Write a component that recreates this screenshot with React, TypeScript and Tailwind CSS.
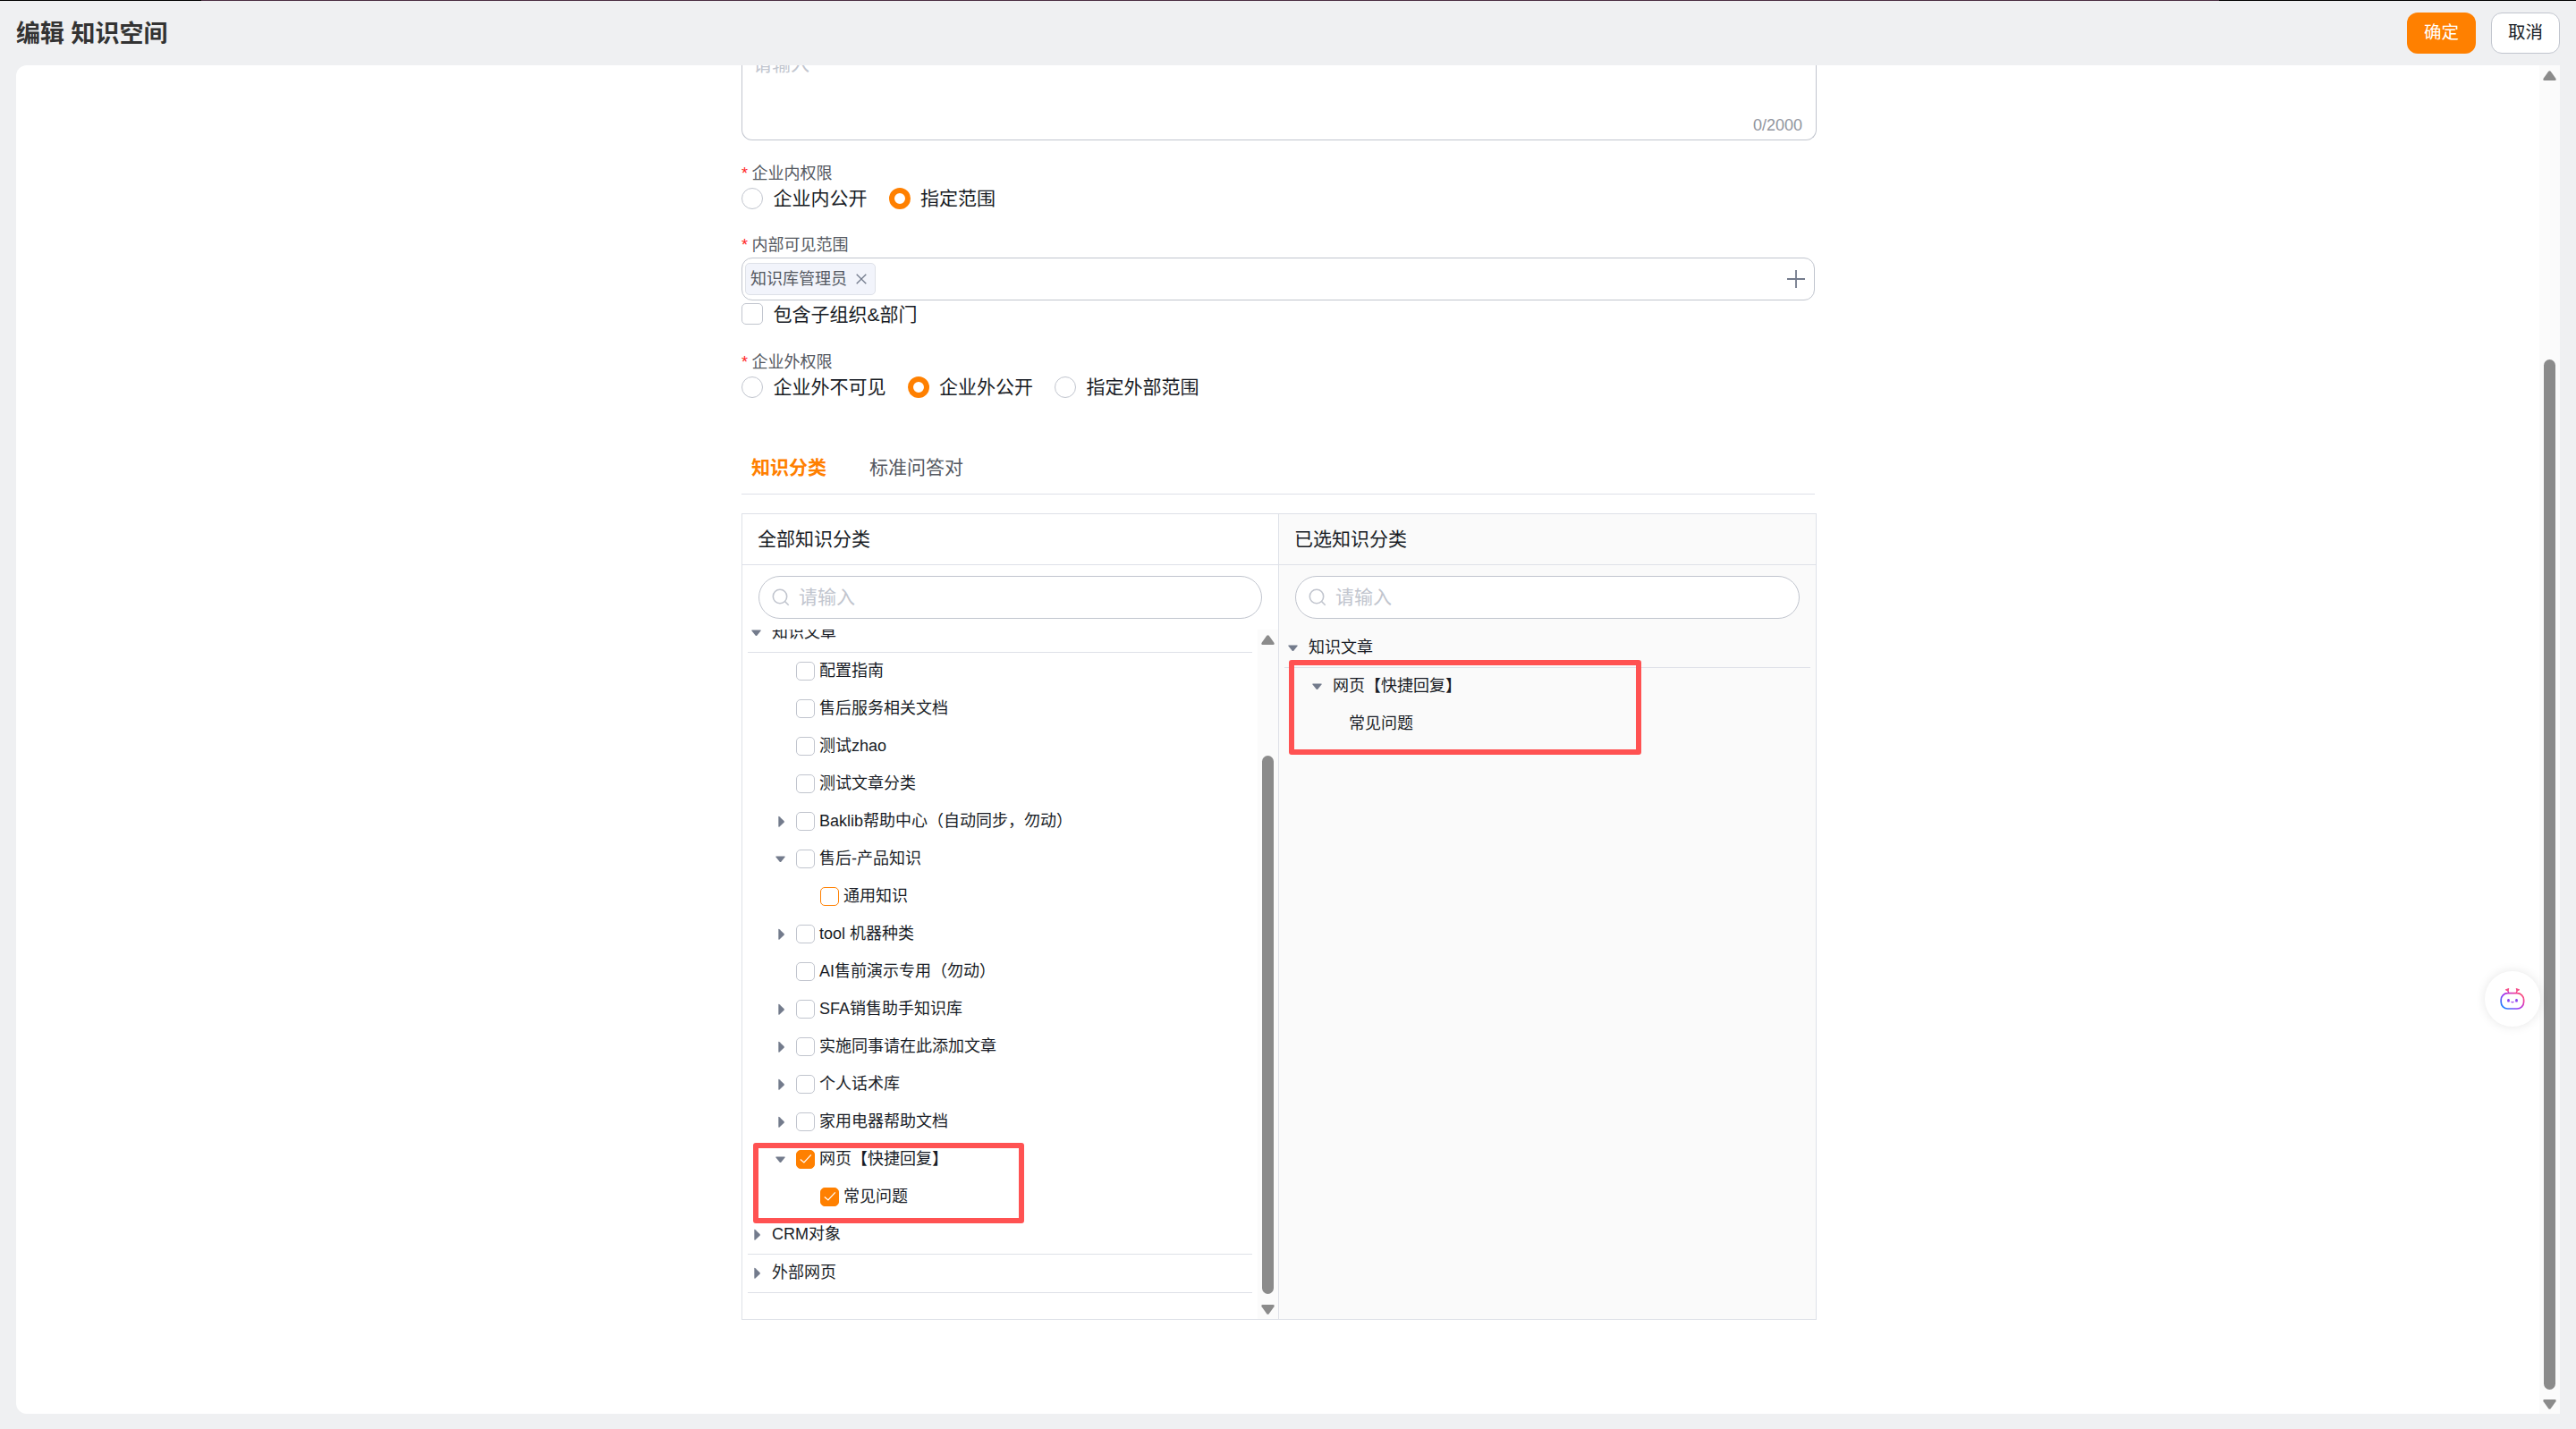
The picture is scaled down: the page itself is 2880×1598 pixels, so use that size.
import type { ReactNode } from 'react';
import clsx from 'clsx';

type TreeNode = {
  label: string;
  level: 0 | 1 | 2;
  arrow?: 'open' | 'closed';
  box?: 'off' | 'on' | 'hover';
};

const allNodes: TreeNode[] = [
  { label: '知识文章', level: 0, arrow: 'open' },
  { label: '配置指南', level: 1, box: 'off' },
  { label: '售后服务相关文档', level: 1, box: 'off' },
  { label: '测试zhao', level: 1, box: 'off' },
  { label: '测试文章分类', level: 1, box: 'off' },
  { label: 'Baklib帮助中心（自动同步，勿动）', level: 1, arrow: 'closed', box: 'off' },
  { label: '售后-产品知识', level: 1, arrow: 'open', box: 'off' },
  { label: '通用知识', level: 2, box: 'hover' },
  { label: 'tool 机器种类', level: 1, arrow: 'closed', box: 'off' },
  { label: 'AI售前演示专用（勿动）', level: 1, box: 'off' },
  { label: 'SFA销售助手知识库', level: 1, arrow: 'closed', box: 'off' },
  { label: '实施同事请在此添加文章', level: 1, arrow: 'closed', box: 'off' },
  { label: '个人话术库', level: 1, arrow: 'closed', box: 'off' },
  { label: '家用电器帮助文档', level: 1, arrow: 'closed', box: 'off' },
  { label: '网页【快捷回复】', level: 1, arrow: 'open', box: 'on' },
  { label: '常见问题', level: 2, box: 'on' },
  { label: 'CRM对象', level: 0, arrow: 'closed' },
  { label: '外部网页', level: 0, arrow: 'closed' },
];

const selectedNodes: TreeNode[] = [
  { label: '知识文章', level: 0, arrow: 'open' },
  { label: '网页【快捷回复】', level: 1, arrow: 'open' },
  { label: '常见问题', level: 2 },
];

function Caret({ state }: { state?: 'open' | 'closed' }) {
  return (
    <svg viewBox="0 0 18 18" className="h-[18px] w-[18px] shrink-0 fill-[#737b8c]">
      {state === 'open' && <path d="M5 5.500h9q1.300 0 .5 1.100L10.500 11.600q-1 1-2 0L4.500 6.600q-.8-1.100.5-1.100z" />}
      {state === 'closed' && <path d="M7.300 3.600q0-1.300 1.200-.4l5 4.700q.9.900 0 1.800l-5 4.700q-1.200.9-1.200-.4z" />}
    </svg>
  );
}

function TreeCheckbox({ state }: { state: 'off' | 'on' | 'hover' }) {
  return (
    <span
      className={clsx(
        'flex h-[21px] w-[21px] shrink-0 items-center justify-center rounded-[5px] border',
        state === 'off' && 'border-[#c1c5ce] bg-white',
        state === 'hover' && 'border-[#ff8000] bg-white',
        state === 'on' && 'border-[#ff8000] bg-[#ff8000]'
      )}
    >
      {state === 'on' && (
        <svg viewBox="0 0 14 14" className="h-[14px] w-[14px] fill-none stroke-white">
          <path d="M.8 7.500 4.900 11 12.800 2.400" strokeWidth="1.200" />
        </svg>
      )}
    </span>
  );
}

function TreeRow({ node }: { node: TreeNode }) {
  return (
    <div
      className={clsx(
        'flex shrink-0 items-center text-[18px] text-[#181c25]',
        node.level === 0 && 'h-[43px] border-b border-[#dee1e8]',
        node.level === 1 && 'h-[42px] pl-[27px]',
        node.level === 2 && 'h-[42px]',
        node.level === 2 && (node.box ? 'pl-[54px]' : 'pl-[45px]')
      )}
    >
      <Caret state={node.arrow} />
      {node.box ? (
        <span className="mb-[2px] ml-[9px] mr-[5px]">
          <TreeCheckbox state={node.box} />
        </span>
      ) : (
        <span className="w-[9px]" />
      )}
      <span className="relative -top-px whitespace-pre">{node.label}</span>
    </div>
  );
}

function Radio({ label, checked }: { label: string; checked?: boolean }) {
  return (
    <label className="flex items-center gap-[11.500px]">
      <span
        className={clsx(
          'h-6 w-6 rounded-full bg-white',
          checked ? 'border-[6px] border-[#ff8000]' : 'border border-[#c1c5ce]'
        )}
      />
      <span className="text-[21px] leading-6 text-[#181c25]">{label}</span>
    </label>
  );
}

function FieldLabel({ children }: { children: ReactNode }) {
  return (
    <div className="flex h-[27px] items-center text-[18px] text-[#545861]">
      <span className="mr-[4.500px] text-[18px] text-[#ff1f1f]">*</span>
      <span>{children}</span>
    </div>
  );
}

function SearchBox() {
  return (
    <div className="mx-[18px] mt-3 flex h-12 shrink-0 items-center rounded-full border border-[#c1c5ce] bg-white pl-[14px]">
      <svg viewBox="0 0 20 20" className="h-5 w-5 fill-none stroke-[#c1c5ce]" strokeWidth="1.600">
        <circle cx="9" cy="9" r="7.700" />
        <path d="m14.500 14.500 4.200 4.200" />
      </svg>
      <span className="ml-[10px] text-[21px] text-[#c1c5ce]">请输入</span>
    </div>
  );
}

function ScrollArrow({ down }: { down?: boolean }) {
  return (
    <svg viewBox="0 0 15 11" className={clsx('h-[11px] w-[15px] shrink-0 fill-[#8b8b8b]', down && 'rotate-180')}>
      <path d="M6.300 .8q1.200-1.200 2.400 0l5.700 8q.9 2-1 2.200H1.600q-1.900-.2-1-2.200z" />
    </svg>
  );
}

function CategoryTabs() {
  return (
    <div className="mt-[47px] flex h-[61px] w-[1200px] items-center gap-12 border-b border-[#dee1e8] pl-[11px] pt-px text-[21px]">
      <span className="font-bold text-[#ff8000]">知识分类</span>
      <span className="text-[#545861]">标准问答对</span>
    </div>
  );
}

function CategoryPicker() {
  return (
    <div className="relative mt-[21px] flex h-[902px] w-[1202px] border border-[#dee1e8]">
      <section className="flex w-[600px] flex-col border-r border-[#dee1e8]">
        <h3 className="flex h-[57px] shrink-0 items-center border-b border-[#dee1e8] pl-[17px] text-[21px] text-[#181c25]">
          全部知识分类
        </h3>
        <SearchBox />
        <div className="mt-3 flex min-h-0 flex-1 overflow-hidden">
          <div className="-mt-[17px] ml-[6px] mr-[6px] flex flex-1 flex-col">
            {allNodes.map((node) => (
              <TreeRow key={node.label} node={node} />
            ))}
          </div>
          <div className="flex w-[23px] flex-col items-center bg-[#fbfbfb] pb-[5px] pt-[6px]">
            <ScrollArrow />
            <div className="mt-[124px] h-[602px] w-[13px] rounded-full bg-[#8b8b8b]" />
            <div className="flex-1" />
            <ScrollArrow down />
          </div>
        </div>
      </section>

      <section className="flex flex-1 flex-col bg-[#fafafa]">
        <h3 className="flex h-[57px] shrink-0 items-center border-b border-[#dee1e8] pl-[17px] text-[21px] text-[#181c25]">
          已选知识分类
        </h3>
        <SearchBox />
        <div className="ml-[6px] mr-[6px] mt-3 flex flex-col">
          {selectedNodes.map((node) => (
            <TreeRow key={node.label} node={node} />
          ))}
        </div>
      </section>

      {/* highlight frames */}
      <div className="absolute left-[12px] top-[703px] h-[90px] w-[303px] rounded-[3px] border-[6px] border-[#ff5252]" />
      <div className="absolute left-[611px] top-[163px] h-[106px] w-[394px] rounded-[3px] border-[6px] border-[#ff5252]" />
    </div>
  );
}

function AssistantButton() {
  return (
    <button className="absolute right-[22px] top-[1013px] flex h-[62px] w-[62px] items-center justify-center rounded-full bg-white shadow-[0_0_12px_rgba(0,0,0,0.1)]">
      <svg viewBox="0 0 28 24" className="h-6 w-7 fill-none">
        <defs>
          <linearGradient id="bot" x1="4" y1="24" x2="24" y2="2" gradientUnits="userSpaceOnUse">
            <stop offset="0" stopColor="#0a8dff" />
            <stop offset=".4" stopColor="#9a35f5" />
            <stop offset=".75" stopColor="#f0409f" />
            <stop offset="1" stopColor="#ff5a5a" />
          </linearGradient>
        </defs>
        <rect x="1.200" y="5.600" width="25.400" height="17.400" rx="7.500" stroke="url(#bot)" strokeWidth="1.700" />
        <path d="M9.800 5.500 8.800 2.500M18.200 5.500l1-3" stroke="url(#bot)" strokeWidth="1.200" />
        <path d="M6.300 1.800 9.800.5 9 3.300zM21.700 1.800 18.200.5 19 3.300z" fill="#f5508a" stroke="#f5508a" strokeLinejoin="round" />
        <rect x="8.200" y="12" width="2.600" height="3.600" rx="1.200" fill="#8b45f0" />
        <rect x="17.200" y="12" width="2.600" height="3.600" rx="1.200" fill="#8b45f0" />
        <path d="M12.500 15.300q1.500 1.200 3 0" stroke="#a54af0" strokeWidth="1.200" />
      </svg>
    </button>
  );
}

export default function App() {
  return (
    <div className="flex h-[1598px] w-[2880px] flex-col overflow-hidden bg-[#eff0f2] font-['Liberation_Sans','Noto_Sans_CJK_SC',sans-serif]">
      <div className="flex h-px shrink-0 bg-black">
        <div className="ml-[225px] w-[2256px] bg-[#4a2d42]" />
      </div>
      <header className="flex h-[72px] shrink-0 items-center justify-between px-[18px]">
        <h1 className="pt-[2px] text-[27px] font-bold text-[#333333]">编辑 知识空间</h1>
        <div className="flex gap-[17px]">
          <button className="h-[46px] w-[77px] rounded-xl bg-[#ff8000] text-[19.500px] text-white">确定</button>
          <button className="h-[46px] w-[77px] rounded-xl border border-[#c1c5ce] bg-white text-[19.500px] text-[#181c25]">
            取消
          </button>
        </div>
      </header>

      <main className="relative mx-[18px] flex h-[1508px] shrink-0 overflow-hidden rounded-l-xl bg-white">
        <div className="flex flex-1 flex-col pl-[811px]">
          <div className="flex h-[84px] w-[1202px] shrink-0 justify-between rounded-b-xl border border-t-0 border-[#c1c5ce] pl-3 pr-[15px]">
            <span className="-mt-[17px] text-[21px] leading-8 text-[#c1c5ce]">请输入</span>
            <span className="self-end pb-[2px] text-[18px] leading-7 text-[#91959e]">0/2000</span>
          </div>

          <div className="mt-[24px]">
            <FieldLabel>企业内权限</FieldLabel>
            <div className="mt-[2px] flex gap-[24px]">
              <Radio label="企业内公开" />
              <Radio label="指定范围" checked />
            </div>
          </div>

          <div className="mt-[27px]">
            <FieldLabel>内部可见范围</FieldLabel>
            <div className="flex h-12 w-[1200px] items-center justify-between rounded-xl border border-[#c1c5ce] pl-[3px] pr-[10px]">
              <span className="flex h-9 w-[146px] items-center gap-[10px] rounded-[5px] border border-[#dee1e8] bg-[#f2f4fb] pl-[5px] text-[18px] text-[#545861]">
                知识库管理员
                <svg viewBox="0 0 12 12" className="h-3 w-3 fill-none stroke-[#737b8c]" strokeWidth="1.300">
                  <path d="m.7.7 10.600 10.600M11.300.7.7 11.300" />
                </svg>
              </span>
              <svg viewBox="0 0 20 20" className="h-5 w-5 fill-none stroke-[#737b8c]" strokeWidth="1.800">
                <path d="M10 0v20M0 10h20" />
              </svg>
            </div>
            <label className="mt-[3px] flex items-center gap-[11.500px]">
              <span className="h-6 w-6 rounded-[5px] border border-[#c1c5ce] bg-white" />
              <span className="relative top-px text-[21px] leading-6 text-[#181c25]">包含子组织&amp;部门</span>
            </label>
          </div>

          <div className="mt-[29px]">
            <FieldLabel>企业外权限</FieldLabel>
            <div className="mt-[2px] flex gap-[24px]">
              <Radio label="企业外不可见" />
              <Radio label="企业外公开" checked />
              <Radio label="指定外部范围" />
            </div>
          </div>

          <CategoryTabs />
          <CategoryPicker />
        </div>

        <div className="flex w-[23px] flex-col items-center bg-[#fbfbfb] pb-[5px] pt-[6px]">
          <ScrollArrow />
          <div className="mt-[312px] h-[1152px] w-[13px] rounded-full bg-[#8b8b8b]" />
          <div className="flex-1" />
          <ScrollArrow down />
        </div>

        <AssistantButton />
      </main>
    </div>
  );
}
